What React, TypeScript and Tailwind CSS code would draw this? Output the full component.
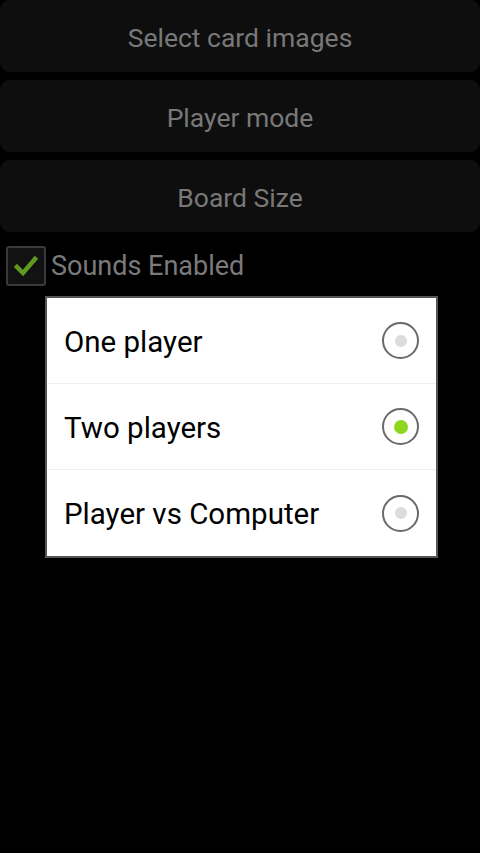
import React, { useState } from 'react';

const options = ['One player', 'Two players', 'Player vs Computer'];

const MenuButton = ({ label }: { label: string }) => (
  <button
    className="flex h-[72px] w-full items-center justify-center rounded-[10px] bg-[#0e0e0e] pt-[3px] text-[26.5px] text-[#787878]"
    type="button"
  >
    {label}
  </button>
);

const Radio = ({ checked }: { checked: boolean }) => (
  <div className="flex h-[37px] w-[37px] items-center justify-center rounded-full border-2 border-[#6a6a6a] bg-white">
    <div
      className={
        checked
          ? 'h-[14px] w-[14px] rounded-full bg-[#8fd61e]'
          : 'h-[12px] w-[12px] rounded-full bg-[#dcdcdc]'
      }
    />
  </div>
);

export default function App() {
  const [mode, setMode] = useState(1);

  return (
    <div
      className="relative h-[853px] w-[480px] overflow-hidden bg-black"
      style={{ fontFamily: 'Roboto, "Noto Sans", sans-serif' }}
    >
      <div className="flex flex-col gap-2">
        <MenuButton label="Select card images" />
        <MenuButton label="Player mode" />
        <MenuButton label="Board Size" />
      </div>

      <div className="mt-[14px] flex items-center pl-[6px]">
        <div className="flex h-[40px] w-[40px] items-center justify-center rounded-[3px] border-2 border-[#3a3a3a] bg-[#121212]">
          <svg height="26" viewBox="0 0 26 26" width="26">
            <path
              d="M4 14 L10 20 L22 6"
              fill="none"
              stroke="#5f9a1e"
              strokeLinecap="square"
              strokeWidth="4.5"
            />
          </svg>
        </div>
        <span className="ml-[5px] text-[27px] text-[#7a7a7a]">Sounds Enabled</span>
      </div>

      {/* player mode dialog */}
      <div className="absolute left-[45px] top-[296px] w-[393px] border-2 border-[#555] bg-white">
        {options.map((opt, i) => (
          <div
            className={
              'flex h-[86px] cursor-pointer items-center justify-between pl-[17px] pr-[17px] ' +
              (i < options.length - 1 ? 'border-b border-[#efefef]' : '')
            }
            key={opt}
            onClick={() => setMode(i)}
          >
            <span className="pt-[3px] text-[29.5px] text-black">{opt}</span>
            <Radio checked={mode === i} />
          </div>
        ))}
      </div>
    </div>
  );
}
